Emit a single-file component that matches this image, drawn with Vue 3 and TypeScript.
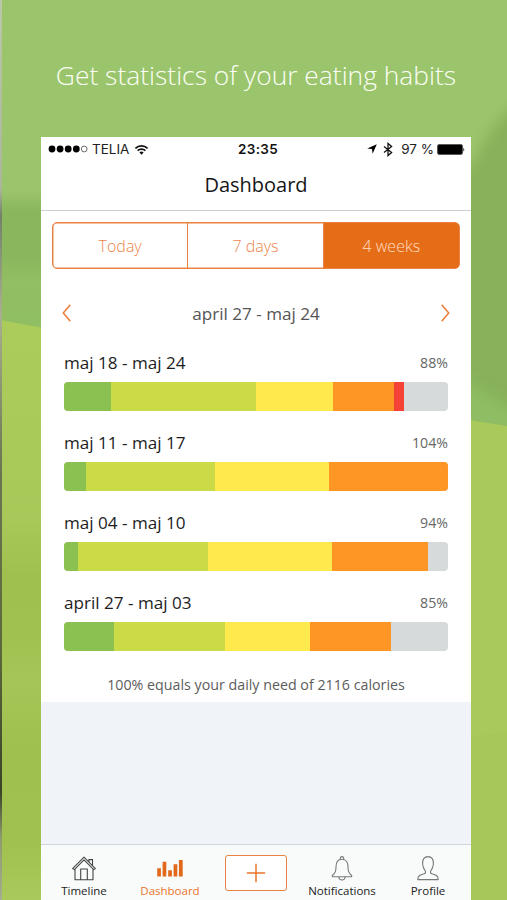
<script setup lang="ts">
import { ref } from 'vue'

interface Segment {
  kind: 'best' | 'good' | 'fair' | 'poor' | 'bad'
  size: number
}
interface Week {
  label: string
  percent: string
  segments: Segment[]
}

const TRACK = 384
const periods = ['Today', '7 days', '4 weeks']
const selected = ref(2)

const weeks: Week[] = [
  {
    label: 'maj 18 - maj 24',
    percent: '88%',
    segments: [
      { kind: 'best', size: 47 },
      { kind: 'good', size: 145 },
      { kind: 'fair', size: 77 },
      { kind: 'poor', size: 61 },
      { kind: 'bad', size: 9.6 },
    ],
  },
  {
    label: 'maj 11 - maj 17',
    percent: '104%',
    segments: [
      { kind: 'best', size: 21.5 },
      { kind: 'good', size: 129.7 },
      { kind: 'fair', size: 113.6 },
      { kind: 'poor', size: 119.2 },
    ],
  },
  {
    label: 'maj 04 - maj 10',
    percent: '94%',
    segments: [
      { kind: 'best', size: 13.5 },
      { kind: 'good', size: 130.5 },
      { kind: 'fair', size: 124 },
      { kind: 'poor', size: 96.2 },
    ],
  },
  {
    label: 'april 27 - maj 03',
    percent: '85%',
    segments: [
      { kind: 'best', size: 49.5 },
      { kind: 'good', size: 111.7 },
      { kind: 'fair', size: 84.8 },
      { kind: 'poor', size: 80.6 },
    ],
  },
]

const width = (size: number) => `${(size / TRACK) * 100}%`
</script>

<template>
  <div class="page">
    <svg class="backdrop" viewBox="0 0 507 900" preserveAspectRatio="none" aria-hidden="true">
      <defs>
        <linearGradient id="leftUpper" x1="0" y1="0" x2="0" y2="1">
          <stop offset="0" stop-color="#9bc56c" />
          <stop offset="0.14" stop-color="#8ab65d" />
          <stop offset="0.45" stop-color="#8ab65d" />
          <stop offset="0.62" stop-color="#93be63" />
          <stop offset="1" stop-color="#8fbe62" />
        </linearGradient>
        <linearGradient id="leftLower" x1="0" y1="0" x2="0" y2="1">
          <stop offset="0" stop-color="#abcb5b" />
          <stop offset="0.34" stop-color="#a8c959" />
          <stop offset="0.44" stop-color="#9fbf4f" />
          <stop offset="0.54" stop-color="#a0c050" />
          <stop offset="0.62" stop-color="#a5c657" />
          <stop offset="0.74" stop-color="#9fbf4e" />
          <stop offset="0.9" stop-color="#a0c04f" />
          <stop offset="1" stop-color="#a9c95b" />
        </linearGradient>
        <linearGradient id="edge" x1="0" y1="0" x2="0" y2="1">
          <stop offset="0" stop-color="#b9c8a8" />
          <stop offset="0.21" stop-color="#a9b69a" />
          <stop offset="0.24" stop-color="#74806b" />
          <stop offset="0.35" stop-color="#a8b08f" />
          <stop offset="0.52" stop-color="#6b7554" />
          <stop offset="0.72" stop-color="#5c683b" />
          <stop offset="0.88" stop-color="#39442a" />
          <stop offset="0.93" stop-color="#8c9b6b" />
          <stop offset="1" stop-color="#a3ad91" />
        </linearGradient>
        <filter id="soft" x="-50%" y="-20%" width="200%" height="140%">
          <feGaussianBlur stdDeviation="7" />
        </filter>
      </defs>
      <rect width="507" height="900" fill="#9bc56c" />
      <rect y="190" width="60" height="150" fill="url(#leftUpper)" />
      <path d="M540 90Q495 112 475 160L440 200V450H540Z" fill="#87b15a" filter="url(#soft)" />
      <path d="M440 366L530 420V450H440Z" fill="#8ebd64" filter="url(#soft)" />
      <path d="M0 320L60 331V900H0Z" fill="url(#leftLower)" />
      <path d="M450 417L507 426V900H450Z" fill="#a9c95b" />
      <path d="M470 736L507 733V900H470Z" fill="#a7c758" />
      <rect width="2" height="900" fill="url(#edge)" />
    </svg>

    <h1 class="headline">Get statistics of your eating habits</h1>

    <main class="phone">
      <div class="status">
        <div class="carrier">
          <svg class="signal" viewBox="0 0 40 8">
            <circle cx="4" cy="4" r="3.4" /><circle cx="12.1" cy="4" r="3.4" />
            <circle cx="20.2" cy="4" r="3.4" /><circle cx="28.3" cy="4" r="3.4" />
            <circle cx="36.2" cy="4" r="2.9" class="hollow" />
          </svg>
          <span class="telia">TELIA</span>
          <svg class="wifi" viewBox="0 0 14 11">
            <path d="M.9 4.3a8.7 8.7 0 0 1 12.2 0M3.1 6.7a5.6 5.6 0 0 1 7.8 0" />
            <path d="M4.9 8.6a3 3 0 0 1 4.2 0L7 10.8z" class="dot" />
          </svg>
        </div>
        <span class="clock">23:35</span>
        <div class="power">
          <svg class="location" viewBox="0 0 10 10"><path d="M9.8.2 5.6 9.8 5 5 .2 4.5z" /></svg>
          <svg class="bluetooth" viewBox="0 0 10 14"><path d="M1 4l7.6 6L5 13V1l3.6 3L1 10" /></svg>
          <span class="charge">97 %</span>
          <svg class="battery" viewBox="0 0 28 11">
            <rect x=".5" y=".5" width="25" height="10" rx="1.5" class="case" />
            <rect x="1" y="1.1" width="24" height="8.8" rx=".8" />
            <path d="M26.4 3.5q1.6 2 0 4z" />
          </svg>
        </div>
      </div>

      <header class="title">Dashboard</header>

      <section class="content">
        <div class="tabs">
          <button
            v-for="(period, i) in periods"
            :key="period"
            class="tab"
            :class="{ active: i === selected }"
            @click="selected = i"
          >{{ period }}</button>
        </div>

        <div class="range">
          <svg class="chevron" viewBox="0 0 10 18"><path d="M8.3 .8 1.3 9l7 8.2" /></svg>
          <span>april 27 - maj 24</span>
          <svg class="chevron" viewBox="0 0 10 18"><path d="M1.7 .8 8.7 9l-7 8.2" /></svg>
        </div>

        <div class="weeks">
          <article v-for="week in weeks" :key="week.label" class="week">
            <div class="caption">
              <span class="label">{{ week.label }}</span>
              <span class="percent">{{ week.percent }}</span>
            </div>
            <div class="track">
              <div
                v-for="segment in week.segments"
                :key="segment.kind"
                :class="segment.kind"
                :style="{ width: width(segment.size) }"
              ></div>
            </div>
          </article>
        </div>

        <p class="note">100% equals your daily need of 2116 calories</p>
      </section>

      <nav class="bottom">
        <a class="item">
          <svg viewBox="0 0 26 26">
            <path d="M1.6 13.6 13 2.1l11.4 11.5-1.7 1L13 4.8l-9.7 9.8zM4 14v10.7h18V14M9.7 24.5V14h6.6v10.5M18 6.8V4.6h3.5v5.8M17.4 4.6h4.6" />
          </svg>
          <span>Timeline</span>
        </a>
        <a class="item current">
          <svg viewBox="0 0 26 26">
            <path d="M.2 13.2h3.7v8.3H.2zM5.6 6.8h3.7v14.7H5.6zM11.2 15.2h3.7v6.3h-3.7zM16.6 9.2h3.7v12.3h-3.7zM21.9 5h3.8v16.5h-3.8z" />
          </svg>
          <span>Dashboard</span>
        </a>
        <a class="item">
          <span class="add">
            <svg viewBox="0 0 20 20"><path d="M10 .8v18.4M.8 10h18.4" /></svg>
          </span>
        </a>
        <a class="item light">
          <svg viewBox="0 0 26 26">
            <path d="M13 4.2C8.6 4.2 7 8 7 12c0 5-1.4 7-3.5 8.3-.6.5-.3 1.5.6 1.5h17.8c.9 0 1.2-1 .6-1.5C20.400 19 19 17 19 12c0-4-1.600-7.800-6-7.800zM11.300 4.300q-.2-2.700 1.700-2.700t1.700 2.700M9.800 22c.4 4 6 4 6.400 0" />
          </svg>
          <span>Notifications</span>
        </a>
        <a class="item light">
          <svg viewBox="0 0 26 26">
            <path d="M2.8 24.6c0-3.2 1.2-4.3 4-5.1l2.3-.7c1.8-.6 1.8-2.1.8-3.5-1.4-1.7-2-3.500-2.300-6C7.200 4.500 9.200 1.600 13 1.600s5.800 2.900 5.400 7.700c-.3 2.500-.9 4.300-2.300 6-1 1.400-1 2.900.8 3.500l2.300.7c2.800.8 4 1.900 4 5.100z" />
          </svg>
          <span>Profile</span>
        </a>
      </nav>
    </main>
  </div>
</template>

<style>
body {
  margin: 0;
}
</style>

<style scoped>
.page {
  position: relative;
  display: flex;
  flex-direction: column;
  box-sizing: border-box;
  width: 507px;
  height: 900px;
  padding: 0 36px 0 41px;
  overflow: hidden;
  font-family: 'Open Sans', 'Noto Sans', sans-serif;
}
.backdrop {
  position: absolute;
  inset: 0;
  width: 100%;
  height: 100%;
}
svg {
  display: block;
  flex: none;
}
.headline {
  position: relative;
  margin: 0;
  height: 137px;
  line-height: 151px;
  font-size: 26.4px;
  font-weight: 320;
  color: #fbfef6;
  text-align: center;
  white-space: nowrap;
}
.phone {
  position: relative;
  display: flex;
  flex-direction: column;
  width: 430px;
  height: 763px;
  background: #f0f4f8;
}
.status {
  display: grid;
  grid-template-columns: 1fr auto 1fr;
  align-items: center;
  height: 24px;
  padding: 0 6px 0 7px;
  background: #fff;
  font-family: Inter, 'Liberation Sans', sans-serif;
  font-size: 13.5px;
  color: #222;
}
.carrier,
.power {
  display: flex;
  align-items: center;
}
.power {
  justify-content: flex-end;
}
.signal {
  width: 40px;
  height: 8px;
}
.signal .hollow {
  fill: none;
  stroke: #444;
  stroke-width: 0.8;
}
.telia {
  margin: 0 5px 0 4px;
}
.wifi {
  width: 15px;
  height: 11px;
  fill: none;
  stroke: #111;
  stroke-width: 1.7;
}
.wifi .dot {
  fill: #111;
  stroke: none;
}
.clock {
  padding-left: 3px;
  font-weight: 600;
  letter-spacing: 0.3px;
  color: #111;
}
.location {
  width: 10px;
  height: 10px;
}
.bluetooth {
  width: 10px;
  height: 15px;
  margin: 0 8px 0 6px;
  fill: none;
  stroke: #111;
  stroke-width: 1.3;
}
.battery {
  width: 28px;
  height: 11px;
  margin-left: 3px;
}
.battery .case {
  fill: none;
  stroke: #111;
  stroke-width: 0.7;
}
.title {
  box-sizing: border-box;
  height: 74px;
  margin-top: -24px;
  padding-top: 24px;
  border-bottom: 1px solid #cfcfd2;
  font-size: 20px;
  line-height: 48px;
  color: #161616;
  text-align: center;
  background: linear-gradient(transparent 24px, #fff 24px);
}
.content {
  height: 491px;
  box-sizing: border-box;
  padding: 11px 11px 0;
  background: #fff;
}
.tabs {
  display: grid;
  grid-template-columns: repeat(3, 1fr);
  box-sizing: border-box;
  height: 47px;
  border: 1px solid #e98243;
  border-radius: 5px;
  overflow: hidden;
  box-shadow: inset 0 0 0 0.5px #e98243;
}
.tab {
  padding: 0;
  border: 0;
  border-right: 1px solid #e98243;
  background: transparent;
  font: 320 16px 'Open Sans', sans-serif;
  color: #ec854a;
}
.tab:last-child {
  border-right: 0;
}
.tab.active {
  background: #e66d17;
  color: #ffdcc2;
}
.range {
  display: flex;
  align-items: center;
  justify-content: space-between;
  height: 88px;
  padding: 0 10px;
  font-size: 17.1px;
  color: #555;
}
.chevron {
  width: 10px;
  height: 18px;
  fill: none;
  stroke: #eb8040;
  stroke-width: 1.6;
}
.weeks {
  padding: 0 12px;
}
.week {
  height: 80px;
}
.week:first-child {
  margin-top: -6px;
}
.caption {
  display: flex;
  align-items: center;
  justify-content: space-between;
  height: 23px;
}
.label {
  font-size: 17.1px;
  line-height: 23px;
  color: #1d1d1d;
}
.percent {
  font-size: 14.200px;
  line-height: 23px;
  color: #666;
}
.track {
  display: flex;
  height: 29px;
  margin-top: 8px;
  border-radius: 4px;
  overflow: hidden;
  background: #d7dada;
}
.best {
  background: #8bc151;
}
.good {
  background: #cbdb48;
}
.fair {
  background: #ffe94c;
}
.poor {
  background: #fd9625;
}
.bad {
  background: #f44336;
}
.note {
  margin: 4px 0 0;
  font-size: 14.25px;
  line-height: 20px;
  color: #5c5c5c;
  text-align: center;
}
.bottom {
  display: grid;
  grid-template-columns: repeat(5, 1fr);
  box-sizing: border-box;
  height: 56px;
  margin-top: auto;
  border-top: 1px solid #cfd6db;
  background: #f9fafa;
}
.item {
  display: flex;
  flex-direction: column;
  align-items: center;
  padding-top: 10px;
  font-size: 11.5px;
  line-height: 18px;
  color: #222;
}
.item > svg {
  width: 26px;
  height: 26px;
  margin-bottom: 1px;
  fill: none;
  stroke: #444;
  stroke-width: 1.1;
  stroke-linejoin: round;
}
.item.light > svg {
  stroke: #777;
}
.item.current {
  color: #e9752c;
}
.item.current > svg {
  fill: #e2691b;
  stroke: none;
}
.add {
  display: flex;
  align-items: center;
  justify-content: center;
  box-sizing: border-box;
  width: 62px;
  height: 36px;
  border: 1px solid #e98243;
  border-radius: 3px;
  background: #fff;
}
.add svg {
  width: 20px;
  height: 20px;
  fill: none;
  stroke: #e9752c;
  stroke-width: 1.5;
}
</style>
